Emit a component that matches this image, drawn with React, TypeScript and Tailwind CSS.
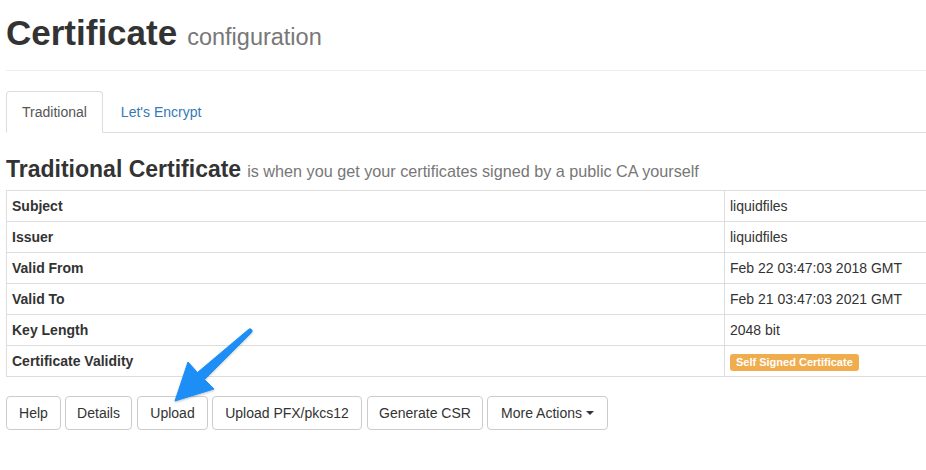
import React from "react";

const rows: [string, React.ReactNode][] = [
  ["Subject", "liquidfiles"],
  ["Issuer", "liquidfiles"],
  ["Valid From", "Feb 22 03:47:03 2018 GMT"],
  ["Valid To", "Feb 21 03:47:03 2021 GMT"],
  ["Key Length", "2048 bit"],
  [
    "Certificate Validity",
    <span className="inline-block rounded-[3px] bg-[#f0ad4e] px-[6px] pt-[3px] pb-[3px] align-middle text-[11px] font-bold leading-[11px] text-white">
      Self Signed Certificate
    </span>,
  ],
];

const buttons: { label: string; cls: string; caret?: boolean }[] = [
  { label: "Help", cls: "w-[55px]" },
  { label: "Details", cls: "ml-[4px] w-[67px]" },
  { label: "Upload", cls: "ml-[5px] w-[71px]" },
  { label: "Upload PFX/pkcs12", cls: "ml-[4px] w-[150px]" },
  { label: "Generate CSR", cls: "ml-[5px] w-[116px]" },
  { label: "More Actions", cls: "ml-[4px] w-[121px]", caret: true },
];

export default function App() {
  return (
    <div
      className="relative h-[470px] w-[926px] overflow-hidden bg-white text-[#333]"
      style={{ fontFamily: '"Liberation Sans", Arial, sans-serif' }}
    >
      <div className="w-[1000px] pl-[6px]">
        <h1 className="mt-[13px] flex h-[40px] items-baseline">
          <span className="text-[35px] font-bold leading-[40px]">Certificate</span>
          <span className="ml-[10px] text-[23.5px] font-normal leading-none text-[#777]">configuration</span>
        </h1>
        <div className="mt-[17px] border-t border-[#eee]" />

        <ul className="mt-[20px] flex border-b border-[#ddd] text-[14px] leading-5">
          <li className="mb-[-1px] mr-[2px] rounded-t-[4px] border border-[#ddd] border-b-transparent bg-white px-[15px] py-[10px] text-[#555]">
            Traditional
          </li>
          <li className="mb-[-1px] rounded-t-[4px] border border-transparent px-[15px] py-[10px] text-[#337ab7]">
            Let's Encrypt
          </li>
        </ul>

        <h3 className="mt-[23px] flex h-[26px] items-baseline">
          <span className="text-[23px] font-bold leading-[26px]">Traditional Certificate</span>
          <span className="ml-[6px] text-[16.2px] leading-none text-[#777]">
            is when you get your certificates signed by a public CA yourself
          </span>
        </h3>

        <table className="mt-[8px] w-[994px] border-collapse text-[14px] leading-5">
          <tbody>
            {rows.map(([k, v]) => (
              <tr key={k}>
                <td className="w-[718px] border border-[#ddd] px-[5px] py-[5px] font-bold">{k}</td>
                <td className="border border-[#ddd] px-[5px] py-[5px]">{v}</td>
              </tr>
            ))}
          </tbody>
        </table>

        <div className="mt-[19px] flex text-[14px] leading-5">
          {buttons.map((b) => (
            <button
              key={b.label}
              className={`${b.cls} flex items-center justify-center rounded-[4px] border border-[#ccc] bg-white py-[6px] text-[#333]`}
            >
              {b.label}
              {b.caret && (
                <span className="ml-[4px] inline-block h-0 w-0 border-x-[4px] border-t-[4px] border-x-transparent border-t-[#333]" />
              )}
            </button>
          ))}
        </div>
      </div>

      <svg className="pointer-events-none absolute left-0 top-0" width="926" height="470">
        <defs>
          <filter id="sh" x="-20%" y="-20%" width="140%" height="140%">
            <feDropShadow dx="0" dy="1" stdDeviation="1" floodColor="#000" floodOpacity="0.25" />
          </filter>
        </defs>
        <path
          d="M 248.5,329.5 L 197.5,372.5 L 188,362 L 175,401 L 214,389 L 204.5,379.5 L 251.5,332.5 A 2 2 0 0 0 248.5,329.5 Z"
          fill="#1e8ef5"
          stroke="#1e8ef5"
          strokeWidth="1"
          strokeLinejoin="round"
          filter="url(#sh)"
        />
      </svg>
    </div>
  );
}
